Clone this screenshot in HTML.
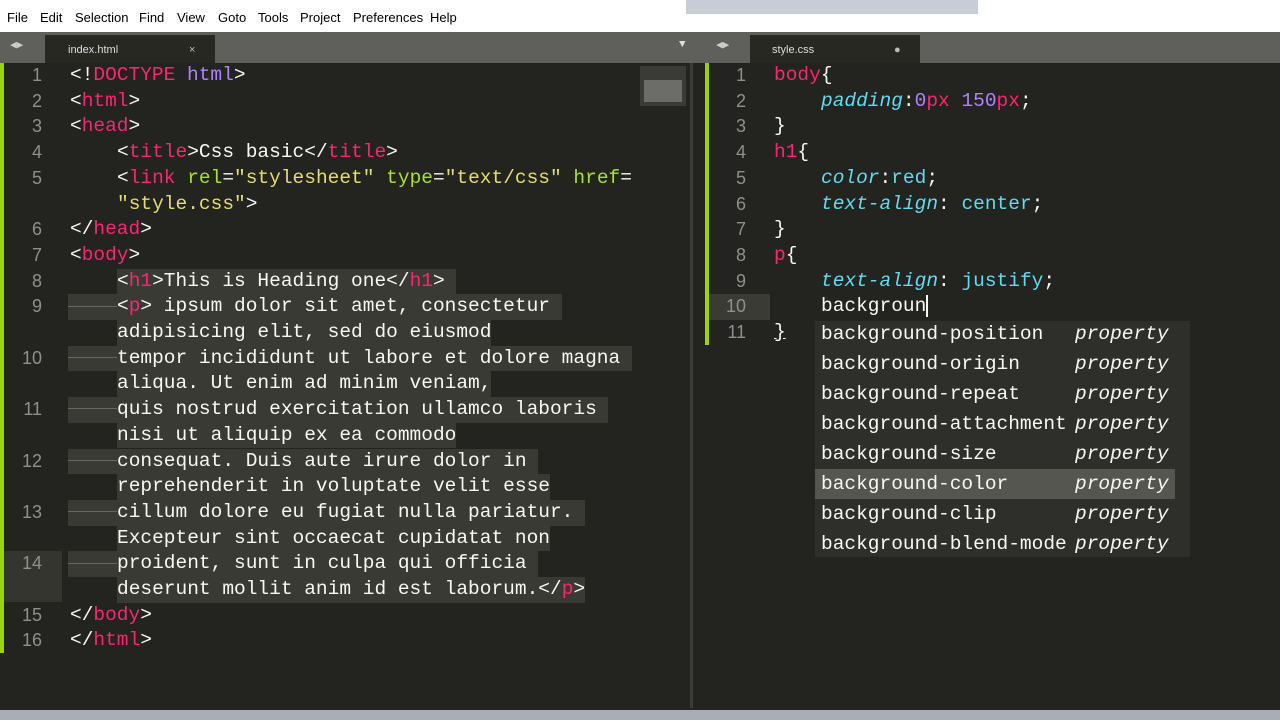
<!DOCTYPE html>
<html><head><style>
*{margin:0;padding:0;box-sizing:border-box}
body{width:1280px;height:720px;overflow:hidden;background:#23241f;font-family:"Liberation Mono",monospace;position:relative}
.menu{position:absolute;left:0;top:0;width:1280px;height:32px;background:#fff;font:13px "Liberation Sans",sans-serif;color:#000}
.menu span{position:absolute;top:10px}
.tabs{position:absolute;left:0;top:32px;width:1280px;height:31px;background:#5f5f5b}
.tab{position:absolute;top:3px;height:28px;background:#272822;color:#ddd;font:11px "Liberation Sans",sans-serif;padding:9px 0 0 0}
.row{position:absolute;height:25.7px;line-height:25.7px;font-size:19.5px;white-space:pre;color:#f8f8f2}
.ln{position:absolute;height:25.7px;line-height:25.7px;font-size:18px;color:#8f908a;text-align:right;width:40px;font-family:"Liberation Sans",sans-serif}
.t{color:#f92672}.a{color:#a6e22e}.s{color:#e6db74}.p{color:#ae81ff}.c{color:#66d9ef;font-style:italic}.v{color:#66d9ef}
.sel{background:#393a34}
.d{display:inline-block;width:49px;height:1px;background:#666;vertical-align:middle}
.ac{position:absolute;left:815px;top:321px;width:375px;height:236px;background:#2e2f2a}
.ai{position:absolute;left:0;width:360px;height:30px;line-height:30px;font-size:19.5px;color:#f8f8f2;white-space:pre;padding-left:6px}
.ai i{position:absolute;left:260px}
</style></head><body>
<div class="menu"><span style="left:7px">File</span><span style="left:40px">Edit</span><span style="left:75px">Selection</span><span style="left:139px">Find</span><span style="left:177px">View</span><span style="left:218px">Goto</span><span style="left:258px">Tools</span><span style="left:300px">Project</span><span style="left:353px">Preferences</span><span style="left:430px">Help</span></div>
<div style="position:absolute;left:686px;top:0;width:292px;height:14px;background:#c8ccd4"></div>
<div class="tabs">
<span style="position:absolute;left:10px;top:6px;color:#ccc;font-size:11px">◀▶</span>
<div class="tab" style="left:45px;width:170px;padding-left:23px">index.html<span style="position:absolute;left:144px;color:#bbb">×</span></div>
<span style="position:absolute;left:679px;top:7px;color:#ddd;font-size:11px">▼</span>
<span style="position:absolute;left:716px;top:6px;color:#ccc;font-size:11px">◀▶</span>
<div class="tab" style="left:750px;width:170px;padding-left:22px">style.css<span style="position:absolute;left:144px;color:#bbb">●</span></div>
</div>
<div style="position:absolute;left:0;top:63px;width:4px;height:590px;background:#9ad312"></div>
<div style="position:absolute;left:4px;top:551px;width:58px;height:51px;background:#34352f"></div>
<div style="position:absolute;left:690px;top:63px;width:3px;height:645px;background:#3c3d38"></div>
<div style="position:absolute;left:640px;top:66px;width:46px;height:40px;background:#3a3b36"></div>
<div style="position:absolute;left:644px;top:80px;width:38px;height:22px;background:#8d8d8a;opacity:.6"></div>
<div style="position:absolute;left:705px;top:63px;width:4px;height:282px;background:#9ad312"></div>
<div style="position:absolute;left:709px;top:294px;width:61px;height:26px;background:#3a3b35"></div>
<div style="position:absolute;left:1183px;top:370px;width:5px;height:185px;background:#444"></div>
<div style="position:absolute;left:0;top:710px;width:1280px;height:10px;background:#a9adb6"></div>

<div class="ln" style="left:2px;top:63px">1</div>
<div class="ln" style="left:2px;top:88.7px">2</div>
<div class="ln" style="left:2px;top:114.4px">3</div>
<div class="ln" style="left:2px;top:140.1px">4</div>
<div class="ln" style="left:2px;top:165.8px">5</div>
<div class="ln" style="left:2px;top:217.2px">6</div>
<div class="ln" style="left:2px;top:242.9px">7</div>
<div class="ln" style="left:2px;top:268.6px">8</div>
<div class="ln" style="left:2px;top:294.3px">9</div>
<div class="ln" style="left:2px;top:345.7px">10</div>
<div class="ln" style="left:2px;top:397.1px">11</div>
<div class="ln" style="left:2px;top:448.5px">12</div>
<div class="ln" style="left:2px;top:499.9px">13</div>
<div class="ln" style="left:2px;top:551.3px">14</div>
<div class="ln" style="left:2px;top:602.7px">15</div>
<div class="ln" style="left:2px;top:628.4px">16</div>

<div class="row" style="left:70px;top:63px">&lt;!<span class="t">DOCTYPE</span> <span class="p">html</span>&gt;</div>
<div class="row" style="left:70px;top:88.7px">&lt;<span class="t">html</span>&gt;</div>
<div class="row" style="left:70px;top:114.4px">&lt;<span class="t">head</span>&gt;</div>
<div class="row" style="left:117px;top:140.1px">&lt;<span class="t">title</span>&gt;Css basic&lt;/<span class="t">title</span>&gt;</div>
<div class="row" style="left:117px;top:165.8px">&lt;<span class="t">link</span> <span class="a">rel</span>=<span class="s">"stylesheet"</span> <span class="a">type</span>=<span class="s">"text/css"</span> <span class="a">href</span>=</div>
<div class="row" style="left:117px;top:191.5px"><span class="s">"style.css"</span>&gt;</div>
<div class="row" style="left:70px;top:217.2px">&lt;/<span class="t">head</span>&gt;</div>
<div class="row" style="left:70px;top:242.9px">&lt;<span class="t">body</span>&gt;</div>
<div class="row sel" style="left:117px;top:268.6px">&lt;<span class="t">h1</span>&gt;This is Heading one&lt;/<span class="t">h1</span>&gt; </div>
<div class="row sel" style="left:68px;top:294.3px"><span class="d"></span>&lt;<span class="t">p</span>&gt; ipsum dolor sit amet, consectetur </div>
<div class="row sel" style="left:117px;top:320px">adipisicing elit, sed do eiusmod</div>
<div class="row sel" style="left:68px;top:345.7px"><span class="d"></span>tempor incididunt ut labore et dolore magna </div>
<div class="row sel" style="left:117px;top:371.4px">aliqua. Ut enim ad minim veniam,</div>
<div class="row sel" style="left:68px;top:397.1px"><span class="d"></span>quis nostrud exercitation ullamco laboris </div>
<div class="row sel" style="left:117px;top:422.8px">nisi ut aliquip ex ea commodo</div>
<div class="row sel" style="left:68px;top:448.5px"><span class="d"></span>consequat. Duis aute irure dolor in </div>
<div class="row sel" style="left:117px;top:474.2px">reprehenderit in voluptate velit esse</div>
<div class="row sel" style="left:68px;top:499.9px"><span class="d"></span>cillum dolore eu fugiat nulla pariatur. </div>
<div class="row sel" style="left:117px;top:525.6px">Excepteur sint occaecat cupidatat non</div>
<div class="row sel" style="left:68px;top:551.3px"><span class="d"></span>proident, sunt in culpa qui officia </div>
<div class="row sel" style="left:117px;top:577px">deserunt mollit anim id est laborum.&lt;/<span class="t">p</span>&gt;</div>
<div class="row" style="left:70px;top:602.7px">&lt;/<span class="t">body</span>&gt;</div>
<div class="row" style="left:70px;top:628.4px">&lt;/<span class="t">html</span>&gt;</div>

<div class="ln" style="left:706px;top:63px">1</div>
<div class="ln" style="left:706px;top:88.7px">2</div>
<div class="ln" style="left:706px;top:114.4px">3</div>
<div class="ln" style="left:706px;top:140.1px">4</div>
<div class="ln" style="left:706px;top:165.8px">5</div>
<div class="ln" style="left:706px;top:191.5px">6</div>
<div class="ln" style="left:706px;top:217.2px">7</div>
<div class="ln" style="left:706px;top:242.9px">8</div>
<div class="ln" style="left:706px;top:268.6px">9</div>
<div class="ln" style="left:706px;top:294.3px">10</div>
<div class="ln" style="left:706px;top:320px">11</div>

<div class="row" style="left:774px;top:63px"><span class="t">body</span>{</div>
<div class="row" style="left:821px;top:88.7px"><span class="c">padding</span>:<span class="p">0</span><span class="t">px</span> <span class="p">150</span><span class="t">px</span>;</div>
<div class="row" style="left:774px;top:114.4px">}</div>
<div class="row" style="left:774px;top:140.1px"><span class="t">h1</span>{</div>
<div class="row" style="left:821px;top:165.8px"><span class="c">color</span>:<span class="v">red</span>;</div>
<div class="row" style="left:821px;top:191.5px"><span class="c">text-align</span>: <span class="v">center</span>;</div>
<div class="row" style="left:774px;top:217.2px">}</div>
<div class="row" style="left:774px;top:242.9px"><span class="t">p</span>{</div>
<div class="row" style="left:821px;top:268.6px"><span class="c">text-align</span>: <span class="v">justify</span>;</div>
<div class="row" style="left:821px;top:294.3px">backgroun<span style="border-left:2px solid #f8f8f0"></span></div>
<div class="row" style="left:774px;top:320px;text-decoration:underline">}</div>

<div class="ac">
<div class="ai" style="top:-2px">background-position<i>property</i></div>
<div class="ai" style="top:28px">background-origin<i>property</i></div>
<div class="ai" style="top:58px">background-repeat<i>property</i></div>
<div class="ai" style="top:88px">background-attachment<i>property</i></div>
<div class="ai" style="top:118px">background-size<i>property</i></div>
<div class="ai" style="top:148px;background:#55564f">background-color<i>property</i></div>
<div class="ai" style="top:178px">background-clip<i>property</i></div>
<div class="ai" style="top:208px">background-blend-mode<i>property</i></div>
</div>
</body></html>
